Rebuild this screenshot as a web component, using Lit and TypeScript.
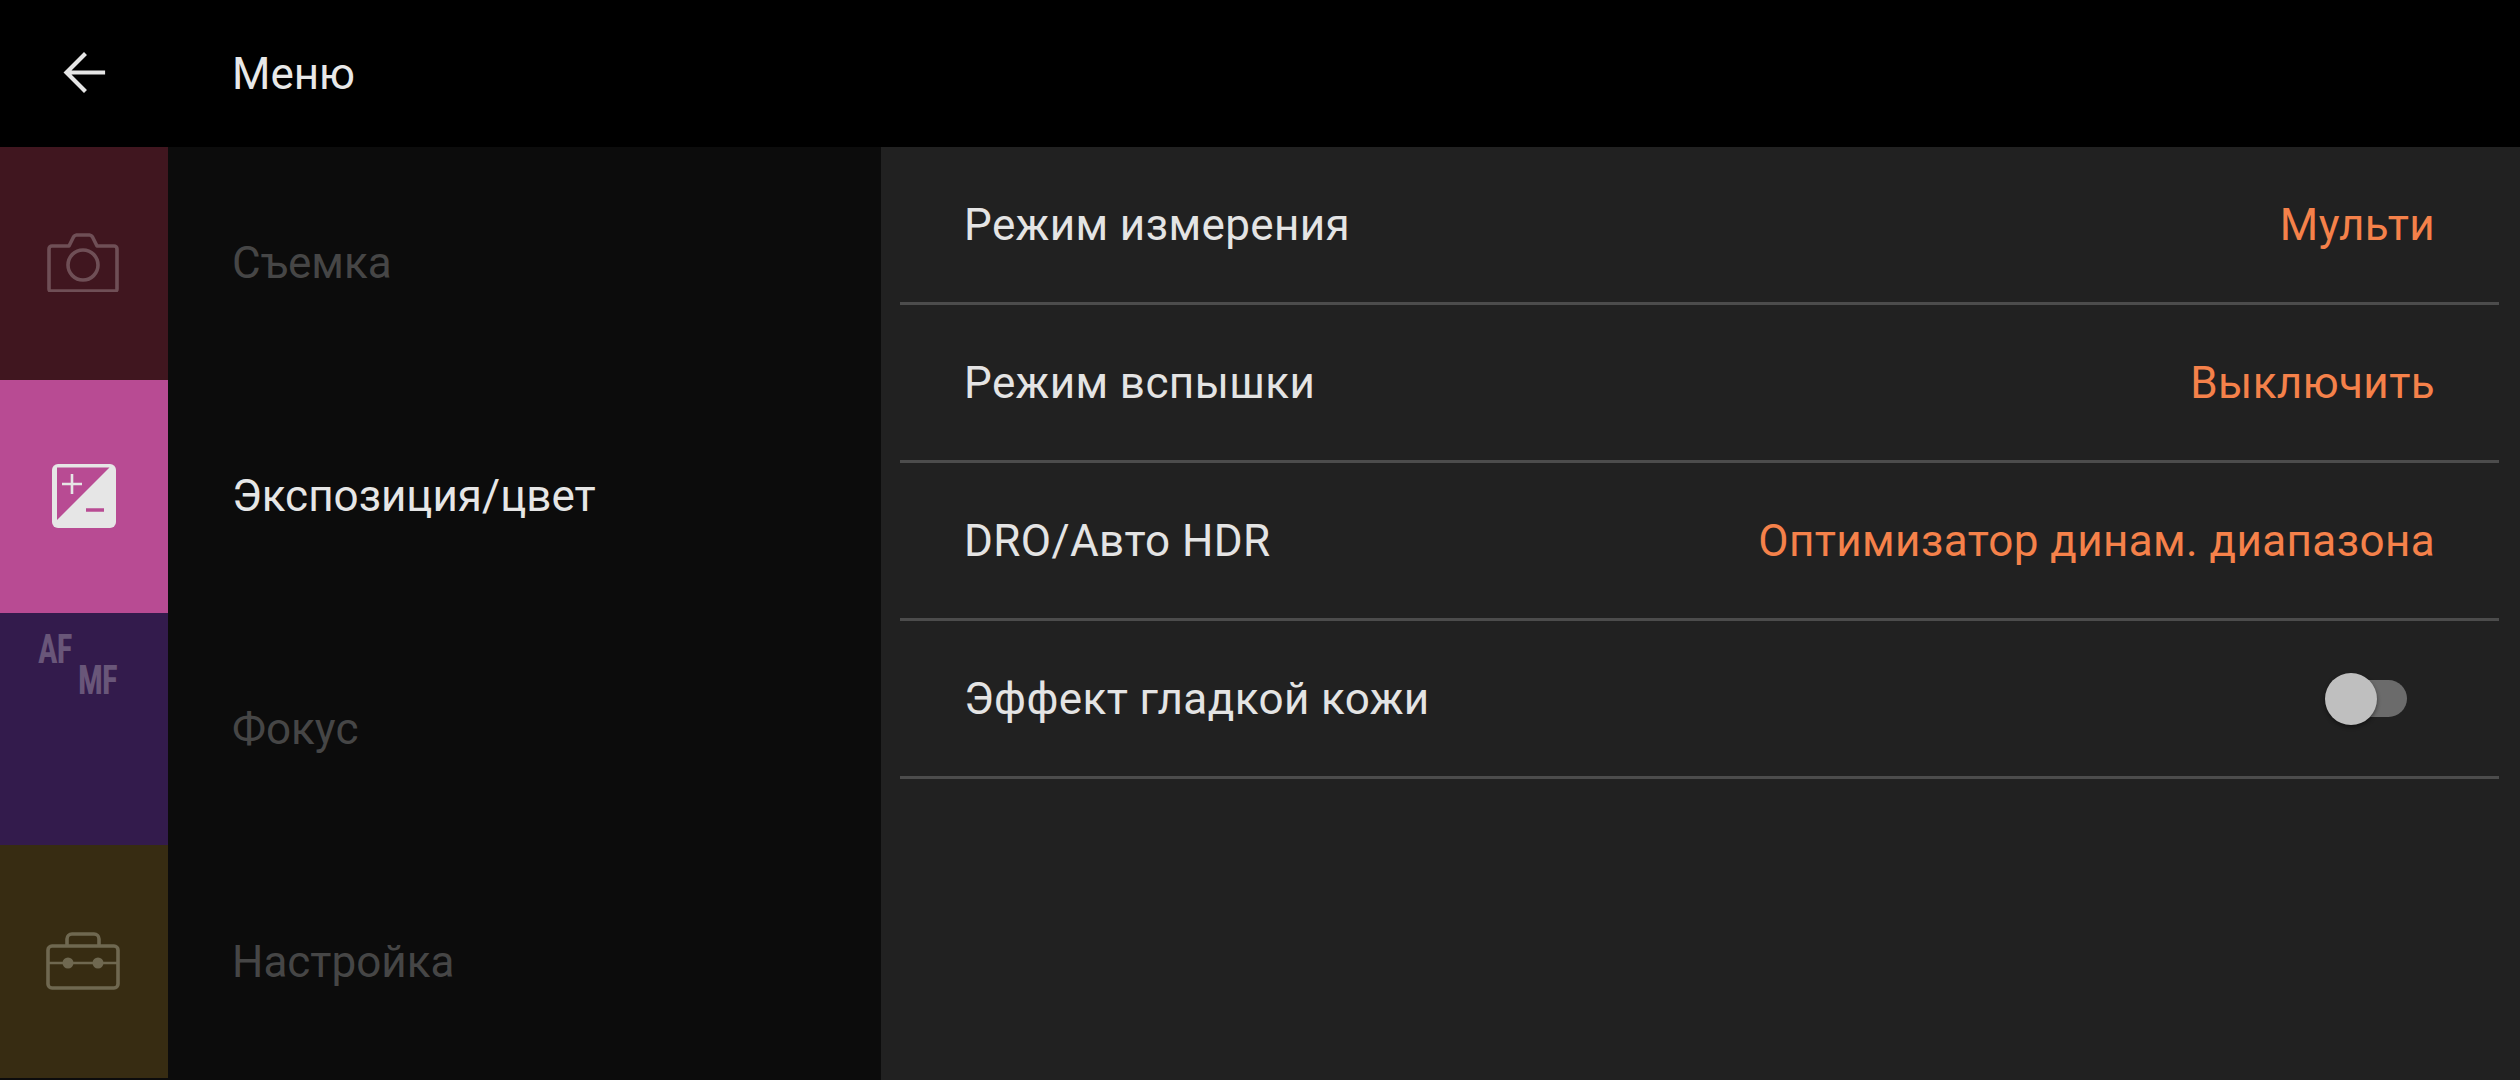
import { LitElement, html, css, svg } from "lit";
import { customElement } from "lit/decorators.js";

const camera = svg`<svg class="ico" viewBox="0 0 74 60" width="74" height="60" fill="none" stroke="currentColor" stroke-width="3.6" stroke-linejoin="round">
  <path d="M3 17a3 3 0 0 1 3-3h17l4.500-9a4 4 0 0 1 3-2h13a4 4 0 0 1 3 2l4.500 9h17a3 3 0 0 1 3 3v40a2 2 0 0 1-2 2H5a2 2 0 0 1-2-2z"/>
  <circle cx="37" cy="33" r="15"/></svg>`;

const ev = svg`<svg class="ico" viewBox="0 0 64 64" width="64" height="64">
  <rect x="0" y="0" width="64" height="64" rx="6" fill="currentColor"/>
  <path d="M5 3.500h52.500L5 56z" fill="#b84b93"/>
  <path d="M20 10v20M10 20h20" stroke="currentColor" stroke-width="2.600" fill="none"/>
  <path d="M34 46h18" stroke="#b84b93" stroke-width="3.500" fill="none"/></svg>`;

const toolbox = svg`<svg class="ico" viewBox="0 0 74 58" width="74" height="58" fill="none" stroke="currentColor" stroke-width="3.600" stroke-linejoin="round">
  <path d="M21 14V7a5 5 0 0 1 5-5h22a5 5 0 0 1 5 5v7"/>
  <rect x="2" y="14" width="70" height="42" rx="4"/>
  <path d="M2 31h70" stroke-width="2.600"/>
  <circle cx="22" cy="31" r="5.500" fill="currentColor" stroke="none"/>
  <circle cx="52" cy="31" r="5.500" fill="currentColor" stroke="none"/></svg>`;

const back = svg`<svg viewBox="0 0 44 44" width="44" height="44" fill="none" stroke="#e6e6e6" stroke-width="4.200" stroke-linecap="square">
  <path d="M41 21.500H6M22 4 4.500 21.500 22 39"/></svg>`;

@customElement("app-root")
export class AppRoot extends LitElement {
  static styles = css`
    :host {
      display: flex;
      flex-direction: column;
      width: 2520px;
      height: 1080px;
      background: #000;
      font-family: Roboto, "Liberation Sans", sans-serif;
      overflow: hidden;
    }
    .top {
      height: 147px;
      flex: none;
      display: flex;
      align-items: center;
      background: #000;
    }
    .back {
      width: 168px;
      display: flex;
      justify-content: center;
      padding-bottom: 2px;
    }
    .title {
      margin-left: 64px;
      color: #e8e8e8;
      font-size: 44px;
      margin-bottom: 0;
    }
    .body {
      flex: 1;
      display: flex;
      min-height: 0;
    }
    .nav {
      width: 881px;
      flex: none;
      background: #0c0c0c;
      display: grid;
      grid-template-rows: repeat(4, 232.750px);
    }
    .item {
      display: grid;
      grid-template-columns: 168px 1fr;
      align-items: stretch;
    }
    .tile {
      display: flex;
      align-items: center;
      justify-content: center;
    }
    .label {
      display: flex;
      align-items: center;
      padding-left: 64px;
      font-size: 44px;
      color: #464646;
    }
    .item.on .label { color: #e6e6e6; }
    .t0 { background: #40161f; color: #6f4f56; }
    .t1 { background: #b84b93; color: #e6e6e6; }
    .t2 { background: #331b4c; color: #695679; }
    .t3 { background: #372c12; color: #6f6850; }
    .i0 { transform: translate(-1px, 1px); }
    .i3 { transform: translate(-1px, 1px); }
    .af {
      position: relative;
      width: 92px;
      height: 66px;
      font-family: "Liberation Sans Narrow", "Roboto Condensed", Roboto, sans-serif;
      font-weight: 700;
      font-size: 41px;
      line-height: 1;
      transform: translateY(-67px);
    }
    .af span { position: absolute; letter-spacing: -1px; transform-origin: left top; transform: scaleX(0.8); }
    .af .a { left: 0; top: 0; }
    .af .m { left: 40px; top: 31px; }
    .main {
      flex: 1;
      background: #212121;
      padding: 0 21px 0 19px;
    }
    .row {
      height: 155px;
      border-bottom: 3px solid #4c4c4c;
      display: flex;
      align-items: center;
      justify-content: space-between;
      padding: 0 64px 4px 64px;
      box-sizing: content-box;
      font-size: 44px;
      letter-spacing: 0.4px;
    }
    .row { padding-bottom: 0; padding-right: 64px; }
    .name { color: #e4e4e4; }
    .val { color: #f5814a; }
    .sw {
      position: relative;
      width: 82px;
      height: 52px;
      margin-right: -1px;
      margin-right: 28px;
    }
    .track {
      position: absolute;
      left: 22px;
      right: 0;
      top: 7px;
      height: 37px;
      border-radius: 19px;
      background: #6b6b6b;
    }
    .thumb {
      position: absolute;
      left: 0;
      top: 0;
      width: 52px;
      height: 52px;
      border-radius: 50%;
      background: #bfbfbf;
      box-shadow: 0 2px 4px rgba(0,0,0,.45);
    }
  `;

  render() {
    const rows = [
      ["Режим измерения", "Мульти"],
      ["Режим вспышки", "Выключить"],
      ["DRO/Авто HDR", "Оптимизатор динам. диапазона"],
    ];
    return html`
      <div class="top">
        <div class="back">${back}</div>
        <div class="title">Меню</div>
      </div>
      <div class="body">
        <div class="nav">
          <div class="item"><div class="tile t0"><span class="i0">${camera}</span></div><div class="label">Съемка</div></div>
          <div class="item on"><div class="tile t1">${ev}</div><div class="label">Экспозиция/цвет</div></div>
          <div class="item"><div class="tile t2"><div class="af"><span class="a">AF</span><span class="m">MF</span></div></div><div class="label">Фокус</div></div>
          <div class="item"><div class="tile t3"><span class="i3">${toolbox}</span></div><div class="label">Настройка</div></div>
        </div>
        <div class="main">
          ${rows.map(([n, v]) => html`<div class="row"><span class="name">${n}</span><span class="val">${v}</span></div>`)}
          <div class="row"><span class="name">Эффект гладкой кожи</span><div class="sw"><div class="track"></div><div class="thumb"></div></div></div>
        </div>
      </div>
    `;
  }
}
